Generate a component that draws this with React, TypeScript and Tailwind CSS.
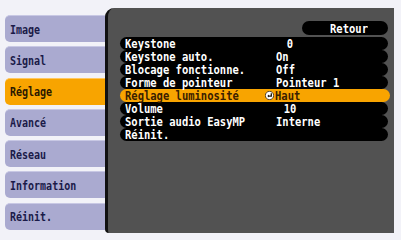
import React from 'react';

const tabs = ['Image', 'Signal', 'Réglage', 'Avancé', 'Réseau', 'Information', 'Réinit.'];

const rows: { label: string; value?: string; align?: 'center' | 'left'; active?: boolean }[] = [
  { label: 'Keystone', value: '0', align: 'center' },
  { label: 'Keystone auto.', value: 'On' },
  { label: 'Blocage fonctionne.', value: 'Off' },
  { label: 'Forme de pointeur', value: 'Pointeur 1' },
  { label: 'Réglage luminosité', value: 'Haut', active: true },
  { label: 'Volume', value: '10', align: 'center' },
  { label: 'Sortie audio EasyMP', value: 'Interne' },
  { label: 'Réinit.' },
];

const font = { fontFamily: '"DejaVu Sans Mono", "Liberation Mono", monospace' };

const ReturnIcon = () => (
  <svg width="9" height="9" viewBox="0 0 10 10" className="shrink-0">
    <circle cx="5" cy="5" r="4.6" fill="#ffffff" stroke="#1a1000" strokeWidth="0.8" />
    <path d="M7 2.5 V5.6 H3.6" fill="none" stroke="#1a1000" strokeWidth="1.4" />
    <path d="M4.4 4 L2.6 5.6 L4.4 7.2 Z" fill="#1a1000" />
  </svg>
);

export default function App() {
  return (
    <div className="w-[401px] h-[240px] bg-[#f2f2f8] flex overflow-hidden" style={font}>
      <div className="w-[112px] shrink-0 pl-[5px] pt-[15px] flex flex-col gap-[4.3px]">
        {tabs.map((t) => (
          <div
            key={t}
            className={`h-[27px] rounded-[5px] flex items-center pl-[5px] text-[10px] font-bold border-t ${
              t === 'Réglage'
                ? 'bg-[#f8a400] text-[#2a1800] border-[#ffc860]'
                : 'bg-[#aaaad0] text-[#1a1a48] border-[#c8c8e4]'
            }`}
          >
            <span className="inline-block scale-y-[1.25]">{t}</span>
          </div>
        ))}
      </div>

      <div className="relative z-10 -ml-[7px] mt-[8px] w-[289px] h-[225px] bg-[#525252] rounded-tl-[9px] rounded-bl-[4px] border-l-[3px] border-[#111] pt-[13px] pl-[12px] pr-[6px]">
        <div className="flex justify-end mb-[2px]">
          <div className="w-[86px] h-[14px] bg-black rounded-full text-white text-[10.5px] font-bold flex items-center justify-center leading-none pl-[8px]">
            <span className="inline-block scale-y-[1.2]">Retour</span>
          </div>
        </div>
        <div className="flex flex-col">
          {rows.map((r) => (
            <div
              key={r.label}
              className={`h-[13px] rounded-full flex items-center text-[10.5px] font-bold leading-none ${
                r.active ? 'bg-[#f8a400] text-[#3a2000] -mr-[2px]' : 'bg-black text-white'
              }`}
            >
              <span className="w-[156px] pl-[5px] shrink-0 inline-block scale-y-[1.2] origin-left">{r.label}</span>
              {r.value && r.align === 'center' ? (
                <span className="w-[28px] text-center inline-block scale-y-[1.2]">{r.value}</span>
              ) : r.active ? (
                <span className="flex items-center -ml-[11px] gap-[1px]">
                  <ReturnIcon />
                  <span className="inline-block scale-y-[1.2]">{r.value}</span>
                </span>
              ) : (
                <span className="inline-block scale-y-[1.2]">{r.value}</span>
              )}
            </div>
          ))}
        </div>
      </div>
    </div>
  );
}
